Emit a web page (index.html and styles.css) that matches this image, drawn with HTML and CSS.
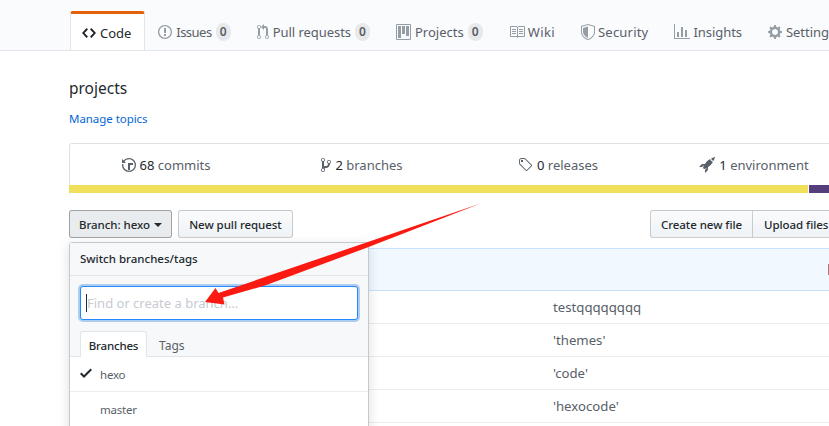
FILE: index.html
```html
<!DOCTYPE html>
<html lang="en">
<head>
<meta charset="utf-8">
<title>projects</title>
<link rel="stylesheet" href="styles.css">
</head>
<body>
<header class="repo-head">
  <nav class="tabs">
    <a class="tab tab-active"><svg class="ico ico-code" width="14" height="16" viewBox="0 0 14 16"><path d="M9.5 3L8 4.5 11.5 8 8 11.5 9.5 13 14 8 9.5 3zm-5 0L0 8l4.5 5L6 11.5 2.5 8 6 4.5 4.5 3z"/></svg>Code</a>
    <a class="tab tab-issues"><svg class="ico" width="14" height="16" viewBox="0 0 14 16"><path d="M7 2.3c3.14 0 5.7 2.56 5.7 5.7s-2.56 5.7-5.7 5.7A5.71 5.71 0 0 1 1.3 8c0-3.14 2.56-5.7 5.7-5.7zM7 1C3.14 1 0 4.14 0 8s3.14 7 7 7 7-3.14 7-7-3.14-7-7-7zm1 3H6v5h2V4zm0 6H6v2h2v-2z"/></svg>Issues<span class="counter">0</span></a>
    <a class="tab"><svg class="ico" width="12" height="16" viewBox="0 0 12 16"><path d="M11 11.28V5c-.03-.78-.34-1.47-.94-2.06C9.46 2.35 8.78 2.03 8 2H7V0L4 3l3 3V4h1c.27.02.48.11.69.31.21.2.3.42.31.69v6.28A1.993 1.993 0 0 0 10 15a1.993 1.993 0 0 0 1-3.72zm-1 2.92c-.66 0-1.2-.55-1.2-1.2 0-.65.55-1.2 1.2-1.2.65 0 1.2.55 1.2 1.2 0 .65-.55 1.2-1.2 1.2zM4 3c0-1.11-.89-2-2-2a1.993 1.993 0 0 0-1 3.72v6.56A1.993 1.993 0 0 0 2 15a1.993 1.993 0 0 0 1-3.72V4.72c.59-.34 1-.98 1-1.72zm-.8 10c0 .66-.55 1.2-1.2 1.2-.65 0-1.2-.55-1.2-1.2 0-.65.55-1.2 1.2-1.2.65 0 1.2.55 1.2 1.2zM2 4.2C1.34 4.2.8 3.65.8 3c0-.65.55-1.2 1.2-1.2.65 0 1.2.55 1.2 1.2 0 .65-.55 1.2-1.2 1.2z"/></svg>Pull requests<span class="counter">0</span></a>
    <a class="tab tab-projects"><svg class="ico" width="15" height="16" viewBox="0 0 15 16"><path fill-rule="evenodd" d="M10 12h3V2h-3v10zm-4-2h3V2H6v8zm-4 4h3V2H2v12zm-1 1h13V1H1v14zM14 0H1a1 1 0 0 0-1 1v14a1 1 0 0 0 1 1h13a1 1 0 0 0 1-1V1a1 1 0 0 0-1-1z"/></svg>Projects<span class="counter">0</span></a>
    <a class="tab tab-tight tab-wiki"><svg class="ico" width="16" height="16" viewBox="0 0 16 16"><path fill-rule="evenodd" d="M3 5h4v1H3V5zm0 3h4V7H3v1zm0 2h4V9H3v1zm11-5h-4v1h4V5zm0 2h-4v1h4V7zm0 2h-4v1h4V9zm2-6v9c0 .55-.45 1-1 1H9.5l-1 1-1-1H2c-.55 0-1-.45-1-1V3c0-.55.45-1 1-1h5.5l1 1 1-1H15c.55 0 1 .45 1 1zm-8 .5L7.5 3H2v9h6V3.5zm7-.5H9.5l-.5.5V12h6V3z"/></svg>Wiki</a>
    <a class="tab tab-tight tab-security"><svg class="ico" width="14" height="16" viewBox="0 0 14 16"><path fill-rule="evenodd" d="M7 0L0 2v6.02C0 12.69 5.31 16 7 16c1.69 0 7-3.31 7-7.98V2L7 0zm0 1.05l6 1.71v5.26C13 12 8.4 15 7 15c-1.4 0-6-3-6-6.98V2.76l6-1.71zM7 2.5L2 3.9v4.12C2 11 5.8 13.6 7 13.9V2.5z"/></svg>Security</a>
    <a class="tab tab-tight"><svg class="ico" width="16" height="16" viewBox="0 0 16 16"><path d="M16 14v1H0V0h1v14h15zM5 13H3V8h2v5zm4 0H7V3h2v10zm4 0h-2V6h2v7z"/></svg>Insights</a>
    <a class="tab"><svg class="ico" width="14" height="16" viewBox="0 0 14 16"><path fill-rule="evenodd" d="M14 8.77v-1.6l-1.94-.64-.45-1.09.88-1.84-1.13-1.13-1.81.91-1.09-.45-.69-1.92h-1.6l-.63 1.94-1.11.45-1.84-.88-1.13 1.13.91 1.81-.45 1.09L0 7.23v1.59l1.94.64.45 1.09-.88 1.84 1.13 1.13 1.81-.91 1.09.45.69 1.92h1.59l.63-1.94 1.11-.45 1.84.88 1.13-1.13-.92-1.81.47-1.09L14 8.75v.02zM7 11c-1.66 0-3-1.34-3-3s1.34-3 3-3 3 1.34 3 3-1.34 3-3 3z"/></svg>Settings</a>
  </nav>
</header>

<main class="container">
  <p class="description">projects</p>
  <a class="topics">Manage topics</a>

  <section class="summary">
    <ul class="numbers">
      <li class="num"><svg class="num-ico" width="14" height="16" viewBox="0 0 14 16"><path d="M8 13H6V6h5v2H8v5zM7 1C4.81 1 2.87 2.02 1.59 3.59L0 2v4h4L2.5 4.5C3.55 3.17 5.17 2.3 7 2.3c3.14 0 5.7 2.56 5.7 5.7s-2.56 5.7-5.7 5.7A5.71 5.71 0 0 1 1.3 8c0-.34.03-.67.09-1H.08C.03 7.33 0 7.66 0 8c0 3.86 3.14 7 7 7s7-3.14 7-7-3.14-7-7-7z"/></svg><b>68</b> commits</li>
      <li class="num"><svg class="num-ico" width="10" height="16" viewBox="0 0 10 16"><path fill-rule="evenodd" d="M10 5c0-1.11-.89-2-2-2a1.993 1.993 0 0 0-1 3.72v.3c-.02.52-.23.98-.63 1.38-.4.4-.86.61-1.38.63-.83.02-1.48.16-2 .45V4.72a1.993 1.993 0 0 0-1-3.72C.88 1 0 1.89 0 3a2 2 0 0 0 1 1.72v6.56c-.59.35-1 .99-1 1.72 0 1.11.89 2 2 2 1.11 0 2-.89 2-2 0-.53-.2-1-.53-1.36.09-.06.48-.41.59-.47.25-.11.56-.17.94-.17 1.05-.05 1.95-.45 2.75-1.25S8.95 7.77 9 6.73h-.02C9.59 6.37 10 5.73 10 5zM2 1.8c.66 0 1.2.55 1.2 1.2 0 .65-.55 1.2-1.2 1.2C1.35 4.2.8 3.65.8 3c0-.65.55-1.2 1.2-1.2zm0 12.41c-.66 0-1.2-.55-1.2-1.2 0-.65.55-1.2 1.2-1.2.65 0 1.2.55 1.2 1.2 0 .65-.55 1.2-1.2 1.2zm6-8c-.66 0-1.2-.55-1.2-1.2 0-.65.55-1.2 1.2-1.2.65 0 1.2.55 1.2 1.2 0 .65-.55 1.2-1.2 1.2z"/></svg><b>2</b> branches</li>
      <li class="num"><svg class="num-ico" width="15" height="16" viewBox="0 0 15 16"><path fill-rule="evenodd" d="M7.73 1.73C7.26 1.26 6.62 1 5.96 1H3.5C2.13 1 1 2.13 1 3.5v2.47c0 .66.27 1.3.73 1.77l6.06 6.06c.39.39 1.02.39 1.41 0l4.59-4.59a.996.996 0 0 0 0-1.41L7.73 1.73zM2.38 7.09c-.31-.3-.47-.7-.47-1.13V3.5c0-.88.72-1.59 1.59-1.59h2.47c.42 0 .83.16 1.13.47l6.14 6.13-4.73 4.73-6.13-6.15zM3.01 3h2v2H3V3h.01z"/></svg><b>0</b> releases</li>
      <li class="num"><svg class="num-ico" width="16" height="16" viewBox="0 0 16 16"><path d="M12.17 3.83c-.27-.27-.47-.55-.63-.88-.16-.31-.27-.66-.34-1.02-.58.33-1.16.7-1.73 1.13-.58.44-1.14.94-1.69 1.48-.7.7-1.33 1.81-1.78 2.45H3L0 10h3l2-2c-.34.77-1.02 2.98-1 3l1 1c.02.02 2.23-.64 3-1l-2 2v3l3-3v-3c.64-.45 1.75-1.09 2.45-1.78.55-.55 1.05-1.13 1.48-1.7.44-.58.81-1.16 1.13-1.72-.36-.08-.7-.19-1.02-.34a3.39 3.39 0 0 1-.87-.63zM16 0s-.09.38-.3 1.06c-.2.7-.55 1.58-1.06 2.66-.7-.08-1.27-.33-1.66-.7-.39-.39-.63-.94-.7-1.64C13.36.88 14.23.55 14.92.31 15.62.09 16 0 16 0z"/></svg><b>1</b> environment</li>
    </ul>
    <div class="lang-bar"><span class="lang-js"></span><span class="lang-css"></span></div>
  </section>

  <div class="file-nav">
    <button class="btn btn-branch">Branch: <b>hexo</b><i class="caret"></i></button>
    <button class="btn btn-pr">New pull request</button>
    <div class="btn-group">
      <button class="btn btn-left">Create new file</button>
      <button class="btn btn-right">Upload files</button>
    </div>
  </div>

  <section class="files">
    <div class="commit-tease"><span class="sha"></span></div>
    <div class="file-row">testqqqqqqqq</div>
    <div class="file-row">'themes'</div>
    <div class="file-row">'code'</div>
    <div class="file-row">'hexocode'</div>
  </section>

  <div class="menu">
    <div class="menu-title">Switch branches/tags</div>
    <div class="menu-filter">
      <div class="filter-input"><i class="cursor"></i><span>Find or create a branch...</span></div>
      <div class="menu-tabs"><span class="menu-tab menu-tab-active">Branches</span><span class="menu-tab">Tags</span></div>
    </div>
    <div class="menu-item"><svg class="check" width="12" height="16" viewBox="0 0 12 16"><path d="M12 5l-8 8-4-4 1.5-1.5L4 10l6.5-6.5L12 5z"/></svg>hexo</div>
    <div class="menu-item">master</div>
  </div>
</main>

<svg class="arrow" width="829" height="426" viewBox="0 0 829 426"><polygon points="480.5,203.5 218.5,293 215.5,288 205,302 224.5,304.5 223,297.5 265,285.5 366,248"/></svg>
</body>
</html>
```

FILE: styles.css
```css
* { box-sizing: border-box; }
html, body { margin: 0; padding: 0; height: 426px; overflow: hidden; background: #fff; }
body { font-family: "Noto Sans", "Open Sans", sans-serif; font-size: 13px; color: #24292e; position: relative; width: 829px; }
p, ul { margin: 0; padding: 0; list-style: none; }

.repo-head { height: 51px; background: #fafbfc; border-bottom: 1px solid #e1e4e8; padding: 11px 0 0 70px; overflow: hidden; }
.tabs { display: flex; width: 900px; height: 40px; letter-spacing: -.05px; }
.tab { display: flex; align-items: center; height: 40px; padding: 2px 13px 0; color: #586069; white-space: nowrap; }
.tab-issues { letter-spacing: -.5px; }
.tab-projects { letter-spacing: 0; }
.tab-wiki { letter-spacing: .4px; }
.tab-security { letter-spacing: .2px; }
.tab-active { background: #fff; color: #24292e; border: 1px solid #e1e4e8; border-top: 3px solid #e36209; border-bottom: 0; border-radius: 3px 3px 0 0; padding: 0 13px 0 11px; }
.ico { fill: #959da5; margin-right: 4px; flex: none; }
.tab-tight .ico { margin-right: 3px; }
.ico-code { fill: #24292e; }
.counter { display: inline-block; margin-left: 4px; min-width: 15px; height: 18px; line-height: 18px; padding: 0 4px; background: rgba(27,31,35,.08); border-radius: 20px; font-size: 12px; font-weight: 600; text-align: center; color: #586069; letter-spacing: 0; }

.container { width: 800px; margin-left: 69px; position: relative; }
.description { font-size: 15.5px; line-height: 22px; padding-top: 26px; color: #24292e; }
.topics { display: block; font-size: 11.5px; letter-spacing: -.05px; line-height: 18px; margin-top: 11px; color: #0366d6; }

.summary { margin-top: 15px; height: 51px; border: 1px solid #dfe2e5; border-bottom: 0; border-radius: 3px 3px 0 0; width: 800px; display: flex; flex-direction: column; }
.numbers { display: flex; height: 41px; align-items: center; color: #586069; margin-left: -2px; }
.num { flex: 0 0 196px; display: flex; align-items: center; justify-content: center; white-space: pre; }
.num b { font-weight: 400; color: #24292e; }
.num-ico { fill: #586069; margin-right: 4px; flex: none; }

.lang-bar { display: flex; height: 8px; margin: 0 -1px; gap: 1px; }
.lang-js { width: 739px; background: #f1e05a; }
.lang-css { flex: 1; background: #563d7c; }

.file-nav { display: flex; margin-top: 16px; height: 28px; }
.btn { font: inherit; font-size: 11.5px; font-weight: 500; letter-spacing: -.05px; color: #24292e; height: 28px; padding: 0; border: 1px solid rgba(27,31,35,.2); border-radius: 3px; background: linear-gradient(#fafbfc, #eff3f6); white-space: nowrap; }
.btn b { font-weight: 500; }
.btn-branch { width: 103px; background: #e9ecef; border-color: rgba(27,31,35,.35); }
.btn-pr { margin-left: 6px; width: 115px; }
.caret { display: inline-block; margin-left: 4px; vertical-align: 2px; border: 4px solid transparent; border-top-color: #24292e; border-bottom: 0; }
.btn-group { display: flex; margin-left: 357px; }
.btn-left { border-radius: 3px 0 0 3px; width: 103px; }
.btn-right { border-radius: 0 3px 3px 0; margin-left: -1px; width: 100px; padding-left: 11px; text-align: left; }

.files { margin-top: 10px; }
.commit-tease { height: 43px; background: #f1f8ff; border: 1px solid #c8e1ff; border-radius: 3px 3px 0 0; display: flex; align-items: center; }
.sha { display: block; width: 3px; height: 11px; background: #b0787c; margin-left: 758px; }
.file-row { height: 33px; padding-left: 484px; line-height: 32px; font-size: 13.2px; color: #586069; border-bottom: 1px solid #eaecef; }

.menu { position: absolute; left: 0; top: 191px; width: 300px; height: 240px; background: #fff; border: 1px solid #c6c9cc; border-radius: 3px 3px 0 0; box-shadow: 0 3px 12px rgba(27,31,35,.15); }
.menu-title { height: 33px; line-height: 32px; padding-left: 10px; font-size: 11.5px; font-weight: 500; color: #24292e; background: #f6f8fa; border-bottom: 1px solid #e1e4e8; }
.menu-filter { height: 81px; background: #f6f8fa; border-bottom: 1px solid #e1e4e8; padding: 10px 10px 0; }
.filter-input { height: 34px; background: #fff; border: 1px solid #2188ff; border-radius: 3px; box-shadow: 0 0 0 2px rgba(3,102,214,.3); display: flex; align-items: center; padding-left: 5px; font-size: 13px; color: #c6cbd1; white-space: nowrap; }
.cursor { width: 1px; height: 18px; background: #24292e; flex: none; }
.menu-tabs { display: flex; margin-top: 11px; height: 26px; }
.menu-tab { display: block; padding: 0 12px; line-height: 30px; font-size: 12px; color: #586069; }
.menu-tab-active { width: 67px; padding: 0; text-align: center; font-size: 11.5px; letter-spacing: -.2px; font-weight: 500; color: #24292e; background: #fff; border: 1px solid #e1e4e8; border-bottom: 0; border-radius: 3px 3px 0 0; height: 26px; line-height: 28px; }
.menu-item { display: flex; align-items: center; height: 35px; padding-left: 30px; font-size: 11.5px; letter-spacing: -.2px; color: #586069; border-bottom: 1px solid #eaecef; position: relative; }
.check { position: absolute; left: 10px; top: 8px; fill: #24292e; }

.arrow { position: absolute; left: 0; top: 0; pointer-events: none; }
.arrow polygon { fill: #fb1a12; }
```
